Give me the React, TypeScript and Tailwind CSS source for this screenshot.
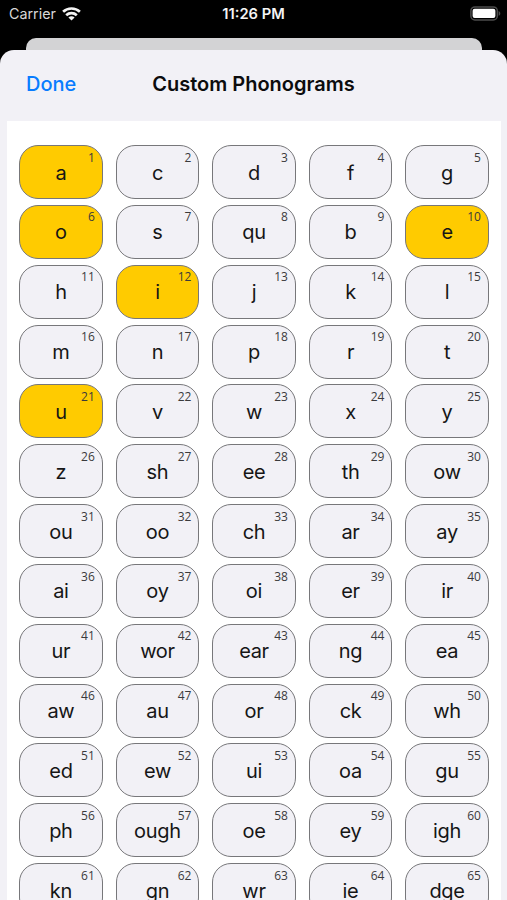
import React, { useState } from 'react';

const PHONOGRAMS = [
  'a', 'c', 'd', 'f', 'g',
  'o', 's', 'qu', 'b', 'e',
  'h', 'i', 'j', 'k', 'l',
  'm', 'n', 'p', 'r', 't',
  'u', 'v', 'w', 'x', 'y',
  'z', 'sh', 'ee', 'th', 'ow',
  'ou', 'oo', 'ch', 'ar', 'ay',
  'ai', 'oy', 'oi', 'er', 'ir',
  'ur', 'wor', 'ear', 'ng', 'ea',
  'aw', 'au', 'or', 'ck', 'wh',
  'ed', 'ew', 'ui', 'oa', 'gu',
  'ph', 'ough', 'oe', 'ey', 'igh',
  'kn', 'gn', 'wr', 'ie', 'dge',
];

function WifiIcon() {
  return (
    <svg width="19" height="14" viewBox="0 0 19 14" fill="none" stroke="#f4f4f4" strokeWidth="2.7">
      <path d="M1.1 4.8C5.8 0.4 13.2 0.4 17.9 4.8" />
      <path d="M4.2 8.2C7.2 5.4 11.8 5.4 14.8 8.2" />
      <path d="M9.5 13.5L6.4 10.4C8.2 8.9 10.8 8.9 12.6 10.4Z" fill="#f4f4f4" stroke="none" />
    </svg>
  );
}

function BatteryIcon() {
  return (
    <svg width="31" height="15" viewBox="0 0 31 15" fill="none">
      <rect x="0.9" y="0.9" width="26.4" height="13" rx="4" stroke="#4c4c4c" strokeWidth="1.5" />
      <rect x="2.6" y="2.8" width="22.8" height="9.2" rx="2" fill="#fff" />
      <path d="M28.6 5v4.8c1-.4 1.7-1.4 1.7-2.4S29.6 5.4 28.6 5Z" fill="#4c4c4c" />
    </svg>
  );
}

function StatusBar() {
  return (
    <div className="grid h-[38px] shrink-0 grid-cols-3 items-start px-[9px] pt-1 text-[14.7px] leading-5 text-[#f4f4f4]">
      <div className="flex items-center gap-[6px]">
        <span className="text-[14.3px] text-[#d8d8d8]">Carrier</span>
        <WifiIcon />
      </div>
      <div className="text-center font-semibold whitespace-nowrap">11:26 PM</div>
      <div className="-mr-[3px] flex h-[19px] items-center justify-end">
        <BatteryIcon />
      </div>
    </div>
  );
}

type TileProps = {
  label: string;
  index: number;
  active: boolean;
  onToggle: () => void;
};

function Tile({ label, index, active, onToggle }: TileProps) {
  return (
    <button
      onClick={onToggle}
      className={`relative flex h-[54px] items-center justify-center rounded-[19px] border border-[#77777a] pt-px text-xl tracking-[-0.015em] text-[#161616] ${
        active ? 'bg-[#ffcb00]' : 'bg-[#f2f1f6]'
      }`}
    >
      {label}
      <span className="absolute top-[3.6px] right-[7px] font-['Open_Sans',sans-serif] text-[12px] leading-4 tracking-normal text-[#3a3a3c]">
        {index}
      </span>
    </button>
  );
}

export default function App() {
  const [selected, setSelected] = useState<string[]>(['a', 'e', 'i', 'o', 'u']);

  const toggle = (p: string) => {
    setSelected(selected.includes(p) ? selected.filter((s) => s !== p) : [...selected, p]);
  };

  return (
    <div className="flex h-[900px] w-[507px] flex-col overflow-hidden bg-black font-['Inter',sans-serif]">
      <StatusBar />

      {/* Card behind the sheet */}
      <div className="mr-[25px] ml-[26px] h-3 shrink-0 rounded-t-[10px] bg-[#d3d3d5]"></div>

      <div className="flex min-h-0 flex-1 flex-col rounded-t-[14px] bg-[#f2f1f6]">
        <header className="grid h-[71px] shrink-0 grid-cols-[1fr_auto_1fr] items-center px-[26px] pb-[3px] text-xl">
          <button className="justify-self-start font-medium text-[#087cff]">Done</button>
          <h1 className="font-semibold text-[#0c0c0d]">Custom Phonograms</h1>
          <span></span>
        </header>

        <main className="mr-[6px] ml-[7px] min-h-0 flex-1 overflow-hidden bg-white px-3 pt-6">
          <div className="grid grid-cols-5 gap-x-[12.7px] gap-y-[5.85px]">
            {PHONOGRAMS.map((p, i) => (
              <Tile key={p} label={p} index={i + 1} active={selected.includes(p)} onToggle={() => toggle(p)} />
            ))}
          </div>
        </main>
      </div>
    </div>
  );
}
